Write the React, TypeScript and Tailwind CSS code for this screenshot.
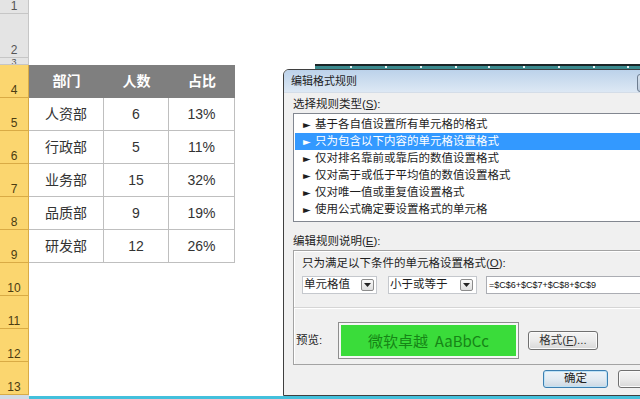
import React from 'react';

type Row = { n: string; h: string; yellow: boolean; head?: boolean; cells?: [string, string, string]; clip?: boolean };

const rows: Row[] = [
  { n: '1', h: 'h-[14px]', yellow: false },
  { n: '2', h: 'h-[44px]', yellow: false },
  { n: '3', h: 'h-[7px]', yellow: false, clip: true },
  { n: '4', h: 'h-[33px]', yellow: true, head: true, cells: ['部门', '人数', '占比'] },
  { n: '5', h: 'h-[33px]', yellow: true, cells: ['人资部', '6', '13%'] },
  { n: '6', h: 'h-[33px]', yellow: true, cells: ['行政部', '5', '11%'] },
  { n: '7', h: 'h-[33px]', yellow: true, cells: ['业务部', '15', '32%'] },
  { n: '8', h: 'h-[33px]', yellow: true, cells: ['品质部', '9', '19%'] },
  { n: '9', h: 'h-[33px]', yellow: true, cells: ['研发部', '12', '26%'] },
  { n: '10', h: 'h-[33px]', yellow: true },
  { n: '11', h: 'h-[33px]', yellow: true },
  { n: '12', h: 'h-[33px]', yellow: true },
  { n: '13', h: 'h-[33px]', yellow: true },
];

const rules = [
  '基于各自值设置所有单元格的格式',
  '只为包含以下内容的单元格设置格式',
  '仅对排名靠前或靠后的数值设置格式',
  '仅对高于或低于平均值的数值设置格式',
  '仅对唯一值或重复值设置格式',
  '使用公式确定要设置格式的单元格',
];

function DropArrow() {
  return (
    <div className="w-[13px] h-[12px] border border-[#8c8c8c] rounded-[2px] bg-gradient-to-b from-[#fafafa] to-[#dedede] flex items-center justify-center">
      <svg width="7" height="4" viewBox="0 0 7 4">
        <path d="M0 0 L7 0 L3.5 4 Z" fill="#222" />
      </svg>
    </div>
  );
}

function Ul({ c }: { c: string }) {
  return <span className="underline underline-offset-1">{c}</span>;
}

export default function App() {
  return (
    <div className="relative w-[640px] h-[399px] overflow-hidden bg-white font-['Liberation_Sans','Noto_Sans_CJK_SC',sans-serif]">
      {/* spreadsheet */}
      <div className="flex flex-col">
        {rows.map((r) => (
          <div key={r.n} className={`flex ${r.h}`}>
            <div
              className={
                r.yellow
                  ? 'w-[29px] shrink-0 border-r border-b border-[#d9ab45] bg-[#fbd66f] text-[#4b3c12] flex justify-center items-end pb-[1px] text-[12px] leading-none overflow-hidden'
                  : r.clip
                  ? 'w-[29px] shrink-0 border-r border-b border-[#c6c6c6] bg-[#e4e4e4] text-[#555] flex justify-center items-start text-[9px] leading-[9px] overflow-hidden'
                  : 'w-[29px] shrink-0 border-r border-b border-[#c6c6c6] bg-[#e4e4e4] text-[#555] flex justify-center items-end pb-[1px] text-[12px] leading-none overflow-hidden'
              }
            >
              {r.n}
            </div>
            {r.cells && r.head && (
              <div className="flex text-white font-bold text-[14px]">
                <div className="w-[75px] bg-[#7f7f7f] flex items-center justify-center">{r.cells[0]}</div>
                <div className="w-[65px] bg-[#7f7f7f] flex items-center justify-center">{r.cells[1]}</div>
                <div className="w-[66px] bg-[#7f7f7f] flex items-center justify-center">{r.cells[2]}</div>
              </div>
            )}
            {r.cells && !r.head && (
              <div className="flex text-[#333] text-[14px]">
                <div className="w-[75px] border-r border-b border-[#bfbfbf] flex items-center justify-center">{r.cells[0]}</div>
                <div className="w-[65px] border-r border-b border-[#bfbfbf] flex items-center justify-center">{r.cells[1]}</div>
                <div className="w-[66px] border-r border-b border-[#bfbfbf] flex items-center justify-center">{r.cells[2]}</div>
              </div>
            )}
          </div>
        ))}
        <div className="flex h-[4px]">
          <div className="w-[29px] bg-[#d3dbe4]" />
          <div className="flex-1 flex flex-col">
            <div className="h-[1px] bg-white" />
            <div className="h-[3px] bg-[#44c0dc]" />
          </div>
        </div>
      </div>

      {/* window behind dialog */}
      <svg className="absolute left-[315px] top-[64px]" width="325" height="5" viewBox="0 0 325 5">
        <rect x="0" y="0" width="325" height="2" fill="#1b2527" />
        <rect x="0" y="2" width="325" height="3" fill="#3b8a8e" />
        {[35, 70, 105, 140, 173, 208, 243, 278, 312].map((x) => (
          <rect key={x} x={x} y="2" width="2" height="2" fill="#e8f4f4" />
        ))}
      </svg>

      {/* dialog */}
      <div className="absolute left-[283px] top-[69px] w-[420px] h-[327px] bg-[#f0f0f0] border border-[#3f3f3f] rounded-tl-[6px] overflow-hidden flex flex-col text-[#1e1e1e]">
        <div className="relative h-[23px] shrink-0 bg-gradient-to-b from-[#bcd2ea] to-[#dde8f4] flex items-center pl-[7px] border-b border-[#d4dde8]">
          <span className="text-[11px] leading-none">编辑格式规则</span>
          <div className="absolute left-[353px] top-[4px] w-[44px] h-[18px] border border-[#6d7d90] rounded-[3px] bg-gradient-to-b from-[#d7e2ee] to-[#bccbdc]" />
        </div>
        <div className="flex flex-col pl-[9px] text-[11.5px]">
          <div className="mt-[3px] h-[16px] leading-[16px]">
            选择规则类型(<Ul c="S" />):
          </div>
          <div className="mt-[1px] h-[109px] w-[400px] border border-[#828790] bg-white pt-[2px] pl-[1px]">
            {rules.map((t, i) => (
              <div
                key={t}
                className={
                  i === 1
                    ? 'h-[17px] flex items-center pl-[8px] bg-[#3399ff] text-white'
                    : 'h-[17px] flex items-center pl-[8px] text-[#1e1e1e]'
                }
              >
                <span className="w-[12px] text-[10px] leading-none font-['DejaVu_Sans',sans-serif]">►</span>
                <span className="leading-none">{t}</span>
              </div>
            ))}
          </div>
          <div className="mt-[11px] h-[16px] leading-[16px]">
            编辑规则说明(<Ul c="E" />):
          </div>
          <div className="mt-[1px] h-[115px] w-[400px] border border-[#a3a3a3] shadow-[inset_1px_1px_0_#ffffff] flex flex-col">
            <div className="mt-[4px] pl-[8px] h-[16px] leading-[16px]">
              只为满足以下条件的单元格设置格式(<Ul c="O" />):
            </div>
            <div className="mt-[5px] pl-[8px] h-[18px] flex">
              <div className="w-[75px] h-[18px] bg-white border border-[#c5c8cd] flex items-center justify-between pl-[1px] pr-[2px]">
                <span className="leading-none">单元格值</span>
                <DropArrow />
              </div>
              <div className="ml-[11px] w-[89px] h-[18px] bg-white border border-[#c5c8cd] flex items-center justify-between pl-[1px] pr-[3px]">
                <span className="leading-none">小于或等于</span>
                <DropArrow />
              </div>
              <div className="ml-[9px] w-[200px] h-[18px] bg-white border border-[#abadb3] flex items-center pl-[2px]">
                <span className="text-[9px] leading-none text-[#111]">=$C$6+$C$7+$C$8+$C$9</span>
              </div>
            </div>
            <div className="mt-[13px] h-[2px] border-t border-[#d5d5d5] border-b border-b-white" />
            <div className="mt-[13px] h-[37px] flex items-center pl-[2px]">
              <span className="w-[42px] leading-none">预览:</span>
              <div className="w-[181px] h-[37px] border border-[#8e8e8e] p-[2px] bg-[#f7f7f7]">
                <div className="w-full h-full bg-[#3adc3a] flex items-center justify-center text-[15px] leading-none text-[#168516] font-['Noto_Sans_CJK_SC',sans-serif]">
                  微软卓越&nbsp; AaBbCc
                </div>
              </div>
              <div className="ml-[9px] w-[70px] h-[19px] rounded-[3px] border border-[#707070] bg-gradient-to-b from-[#f4f4f4] via-[#ebebeb] to-[#d8d8d8] shadow-[inset_0_0_0_1px_#fbfbfb] flex items-center justify-center leading-none text-[#333]">
                格式(<Ul c="F" />)...
              </div>
            </div>
          </div>
          <div className="mt-[5px] pl-[250px] flex">
            <div className="w-[65px] h-[18px] rounded-[3px] border border-[#3c7fb1] bg-gradient-to-b from-[#eef4f9] via-[#e3ebf2] to-[#ccd8e3] shadow-[inset_0_0_0_1px_#bfe2f6] flex items-center justify-center leading-none text-[#222]">
              确定
            </div>
            <div className="ml-[10px] w-[65px] h-[18px] rounded-[3px] border border-[#707070] bg-gradient-to-b from-[#f4f4f4] via-[#ebebeb] to-[#d8d8d8] shadow-[inset_0_0_0_1px_#fbfbfb]" />
          </div>
        </div>
      </div>
    </div>
  );
}
